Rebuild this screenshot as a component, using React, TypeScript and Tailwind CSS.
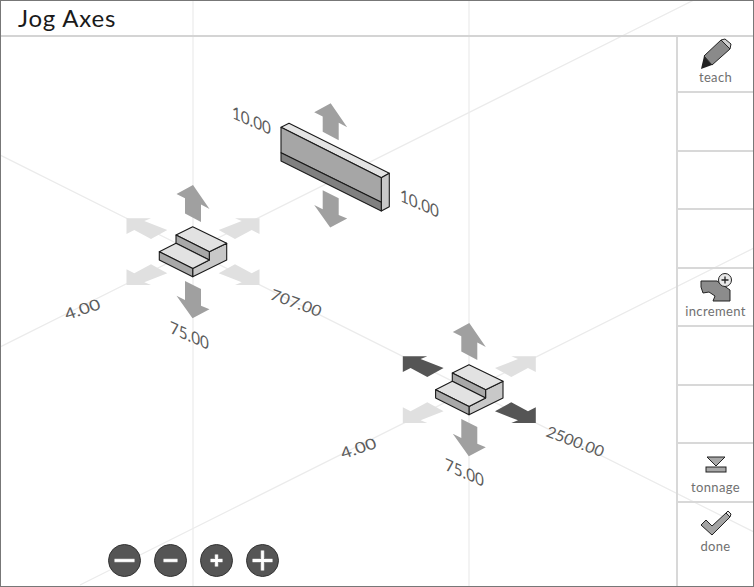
import React from "react";

const font = "font-['Lato',sans-serif]";

const UP = "193,185 209.5,209 201,204.5 201,222 185,213.5 185,198.3 176.5,194";
const DOWN = "185,281 201,289 201,305.7 209.5,309.3 192.5,318.3 176.5,295.7 185,300";
const NE = "259.5,218.3 259.5,234 251.7,230 235,239 218.7,230 241.7,221 235,218.3";
const NW = "126.5,218.3 126.5,234 134.3,230 151,239 167.3,230 144.3,221 151,218.3";
const SE = "259.5,285 259.5,269.3 251.7,273.3 235,264.3 218.7,273.3 241.7,282.3 235,285";
const SW = "126.5,285 126.5,269.3 134.3,273.3 151,264.3 167.3,273.3 144.3,282.3 151,285";

const GREY = "#a0a0a0";
const LIGHT = "#e0e0e0";
const DARK = "#555555";

const Step = () => (
  <g stroke="#1a1a1a" strokeWidth="1.1" strokeLinejoin="round">
    <polygon points="226.7,243.3 226.7,260 192.7,276.7 192.7,268.5 209.3,260 209.3,251.7" fill="#c8c8c8" />
    <polygon points="192.7,226.7 226.7,243.3 209.3,251.7 176,235" fill="#e2e2e2" />
    <polygon points="176,235 209.3,251.7 209.3,260 176,243.3" fill="#a8a8a8" />
    <polygon points="176,243.3 209.3,260 192.7,268.5 159.3,251.7" fill="#e2e2e2" />
    <polygon points="159.3,251.7 192.7,268.5 192.7,276.7 159.3,260" fill="#a8a8a8" />
  </g>
);

// labels sit on the isometric planes, so each one gets its own matrix
const labels = [
  { text: "10.00", m: "0.95 0.42 0 1.08 232 118" },
  { text: "10.00", m: "0.95 0.42 0 1.08 400 201" },
  { text: "75.00", m: "0.95 0.42 0 1.08 170 333" },
  { text: "75.00", m: "0.95 0.42 0 1.08 445 470" },
  { text: "707.00", m: "1 0.36 -0.35 0.9 269 299" },
  { text: "2500.00", m: "0.95 0.36 -0.35 0.9 545 436" },
  { text: "4.00", m: "1.1 -0.36 0.35 0.9 67 320" },
  { text: "4.00", m: "1.1 -0.36 0.35 0.9 343 459" },
];

const Pencil = () => (
  <svg width="34" height="32" viewBox="0 0 34 32">
    <polygon points="22,2 31,11 13,27 5,18" fill="#8a8a8a" stroke="#222" strokeWidth="1" strokeLinejoin="round" />
    <polygon points="22,2 26,1 32,6 31,11" fill="#cfcfcf" stroke="#222" strokeWidth="1" strokeLinejoin="round" />
    <polygon points="5,18 13,27 2,31" fill="#222" />
  </svg>
);

const Increment = () => (
  <svg width="46" height="32" viewBox="692 270 46 32">
    <polygon points="700,279 716,279 729,288 729,299 712,299 714,294 708,290 702,291 700,285" fill="#8c8c8c" stroke="#222" strokeWidth="1" strokeLinejoin="round" />
    <circle cx="724" cy="278" r="6.5" fill="#e8e8e8" stroke="#222" strokeWidth="1" />
    <path d="M724 274.5v7M720.5 278h7" stroke="#222" strokeWidth="1.3" />
  </svg>
);

const Tonnage = () => (
  <svg width="24" height="18" viewBox="0 0 24 18">
    <polygon points="3,1 21,1 12,10" fill="#a8a8a8" stroke="#222" strokeWidth="1" />
    <rect x="2" y="11" width="20" height="5" fill="#a8a8a8" stroke="#222" strokeWidth="1" />
  </svg>
);

const Check = () => (
  <svg width="32" height="26" viewBox="0 0 32 26">
    <polygon points="1,14 6,9 12,15 26,2 30,6 12,24" fill="#a4a4a4" stroke="#222" strokeWidth="1" strokeLinejoin="round" />
    <polygon points="26,2 28,0 31,3 30,6" fill="#e4e4e4" stroke="#222" strokeWidth="1" />
  </svg>
);

const ZoomButton = ({ d }: { d: string }) => (
  <button className="w-[33px] h-[33px] rounded-full bg-[#555555] border border-[#333333] flex items-center justify-center">
    <svg width="31" height="31" viewBox="0 0 31 31">
      <path d={d} stroke="#777" strokeWidth="5" fill="none" />
      <path d={d} stroke="#fff" strokeWidth="2.8" fill="none" />
    </svg>
  </button>
);

const SideItem = ({ icon, label, className }: { icon?: React.ReactNode; label?: string; className: string }) => (
  <div className={`flex flex-col items-center justify-start border-b-2 border-[#d8d8d8] ${className}`}>
    {icon}
    {label && <span className="text-[13px] leading-[15px] tracking-[0.35px] text-[#707070]">{label}</span>}
  </div>
);

export default function App() {
  return (
    <div className={`relative w-[754px] h-[587px] bg-white border border-[#777777] overflow-hidden ${font}`}>
      {/* isometric scene, drawn behind the panels */}
      <svg className="absolute -left-px -top-px" width="754" height="587" viewBox="0 0 754 587">
        <g stroke="#ebebeb" strokeWidth="1.2">
          <line x1="193" y1="0" x2="193" y2="587" />
          <line x1="469" y1="0" x2="469" y2="587" />
          <line x1="0" y1="347" x2="694" y2="0" />
          <line x1="80" y1="585" x2="754" y2="248" />
          <line x1="0" y1="155" x2="754" y2="532" />
        </g>

        {/* left part */}
        <polygon points={NE} fill={LIGHT} />
        <polygon points={NW} fill={LIGHT} />
        <polygon points={SE} fill={LIGHT} />
        <polygon points={SW} fill={LIGHT} />
        <polygon points={UP} fill={GREY} />
        <polygon points={DOWN} fill={GREY} />
        <Step />

        {/* right part */}
        <g transform="translate(276.3 138)">
          <polygon points={NE} fill={LIGHT} />
          <polygon points={NW} fill={DARK} />
          <polygon points={SE} fill={DARK} />
          <polygon points={SW} fill={LIGHT} />
          <polygon points={UP} fill={GREY} />
          <polygon points={DOWN} fill={GREY} />
          <Step />
        </g>

        {/* bar */}
        <polygon points={UP} fill={GREY} transform="translate(137.7 -81.7)" />
        <polygon points={DOWN} fill={GREY} transform="translate(137.7 -90.7)" />
        <g stroke="#1a1a1a" strokeWidth="1.1" strokeLinejoin="round">
          <polygon points="281,127.3 289,123.3 389.3,173.3 381.3,177.7" fill="#e4e4e4" />
          <polygon points="381.3,177.7 389.3,173.3 389.3,206.7 381.3,211" fill="#c8c8c8" />
          <polygon points="281,127.3 381.3,177.7 381.3,202.3 281,152.7" fill="#a6a6a6" />
          <polygon points="281,152.7 381.3,202.3 381.3,211 281,161" fill="#808080" />
        </g>

        {labels.map((l, i) => (
          <text key={i} transform={`matrix(${l.m})`} fontSize="16" fill="#5c5c5c">
            {l.text}
          </text>
        ))}
      </svg>

      <div className="relative flex flex-col h-full">
        <header className="h-[36px] shrink-0 border-b-2 border-[#d4d4d4] pl-[17px] flex items-center">
          <h1 className="text-[24px] leading-none text-[#1a1a1a] tracking-[0.8px]">Jog Axes</h1>
        </header>

        <div className="flex-1 flex justify-end relative">
          <aside className="w-[77px] flex flex-col border-l-2 border-[#d8d8d8]">
            <SideItem className="h-[56px] pt-[1px]" icon={<Pencil />} label="teach" />
            <SideItem className="h-[58.5px]" />
            <SideItem className="h-[58.5px]" />
            <SideItem className="h-[58.5px]" />
            <SideItem className="h-[58.5px] pt-[3px]" icon={<Increment />} label="increment" />
            <SideItem className="h-[58.5px]" />
            <SideItem className="h-[58.5px]" />
            <SideItem className="h-[58.5px] pt-[12px]" icon={<div className="mb-[6px]"><Tonnage /></div>} label="tonnage" />
            <div className="flex-1 flex flex-col items-center pt-[8px]">
              <Check />
              <span className="text-[13px] leading-[15px] tracking-[0.35px] text-[#707070] mt-[2px]">done</span>
            </div>
          </aside>

          {/* zoom controls float over the scene */}
          <div className="absolute left-[107px] bottom-[9px] flex gap-[13px]">
            <ZoomButton d="M5.5 15.5h20" />
            <ZoomButton d="M8.5 15.5h14" />
            <ZoomButton d="M9.5 15.5h12M15.5 9.5v12" />
            <ZoomButton d="M5.5 15.5h20M15.5 5.5v20" />
          </div>
        </div>
      </div>
    </div>
  );
}
